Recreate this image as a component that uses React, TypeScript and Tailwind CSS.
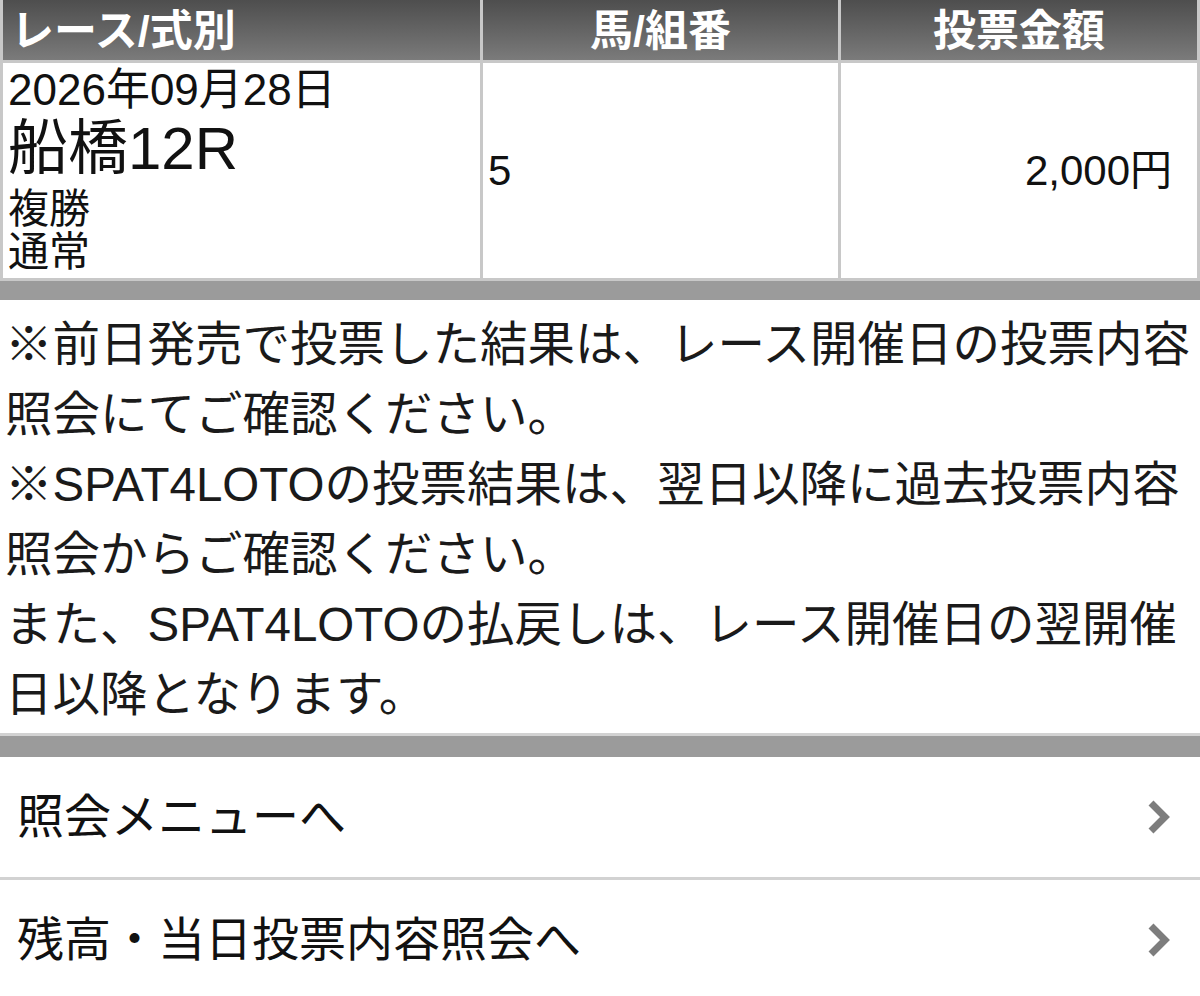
import React from 'react';

const font = "font-['Liberation_Sans','Noto_Sans_CJK_JP',sans-serif]";

const notes = [
  '※前日発売で投票した結果は、レース開催日の投票内容',
  '照会にてご確認ください。',
  '※SPAT4LOTOの投票結果は、翌日以降に過去投票内容',
  '照会からご確認ください。',
  'また、SPAT4LOTOの払戻しは、レース開催日の翌開催',
  '日以降となります。',
];

const menu = ['照会メニューへ', '残高・当日投票内容照会へ'];

function Chevron() {
  return (
    <svg width="26" height="38" viewBox="0 0 26 38" className="shrink-0">
      <polyline
        points="5,5 19,19 5,33"
        fill="none"
        stroke="#7d7d7d"
        strokeWidth="7"
        strokeLinejoin="miter"
      />
    </svg>
  );
}

export default function App() {
  return (
    <div className={`w-[1200px] bg-white text-[#111] ${font}`}>
      {/* bet table */}
      <div className="grid grid-cols-[477px_355px_356px] gap-[3px] bg-[#c8c8c8] px-[3px] pb-[3px]">
        <div className="flex h-[60px] items-center bg-linear-to-b from-[#4e4e4e] to-[#7b7b7b] pl-[8px] pt-[2px] text-[43px] font-bold text-white">
          レース/式別
        </div>
        <div className="flex h-[60px] items-center justify-center bg-linear-to-b from-[#4e4e4e] to-[#7b7b7b] pt-[2px] text-[43px] font-bold text-white">
          馬/組番
        </div>
        <div className="flex h-[60px] items-center justify-center bg-linear-to-b from-[#4e4e4e] to-[#7b7b7b] pt-[2px] text-[43px] font-bold text-white">
          投票金額
        </div>

        <div className="flex h-[215px] flex-col bg-white pl-[5px] pt-[6px]">
          <div className="text-[44px] leading-[42px]">2026年09月28日</div>
          <div className="text-[60px] leading-[76px]">船橋12R</div>
          <div className="text-[41px] leading-[44px]">複勝</div>
          <div className="text-[41px] leading-[42px]">通常</div>
        </div>
        <div className="flex items-center bg-white pl-[5px] text-[42px]">5</div>
        <div className="flex items-center justify-end bg-white pr-[25px] text-[42px]">2,000円</div>
      </div>
      <div className="h-[19px] bg-[#9b9b9b]" />

      {/* notes */}
      <div className="px-[5px] pb-[3px] pt-[10px] text-[47.5px] leading-[70px] text-[#1a1a1a]">
        {notes.map((line) => (
          <div key={line} className="whitespace-nowrap">
            {line}
          </div>
        ))}
      </div>
      <div className="h-[3px] bg-[#d2d2d2]" />
      <div className="h-[21px] bg-[#9b9b9b]" />

      {/* menu links */}
      {menu.map((label, i) => (
        <div key={label}>
          {i > 0 && <div className="h-[3px] bg-[#d2d2d2]" />}
          <div className="flex h-[120px] items-center justify-between pl-[17px] pr-[28px] text-[47px]">
            <span>{label}</span>
            <Chevron />
          </div>
        </div>
      ))}
    </div>
  );
}
